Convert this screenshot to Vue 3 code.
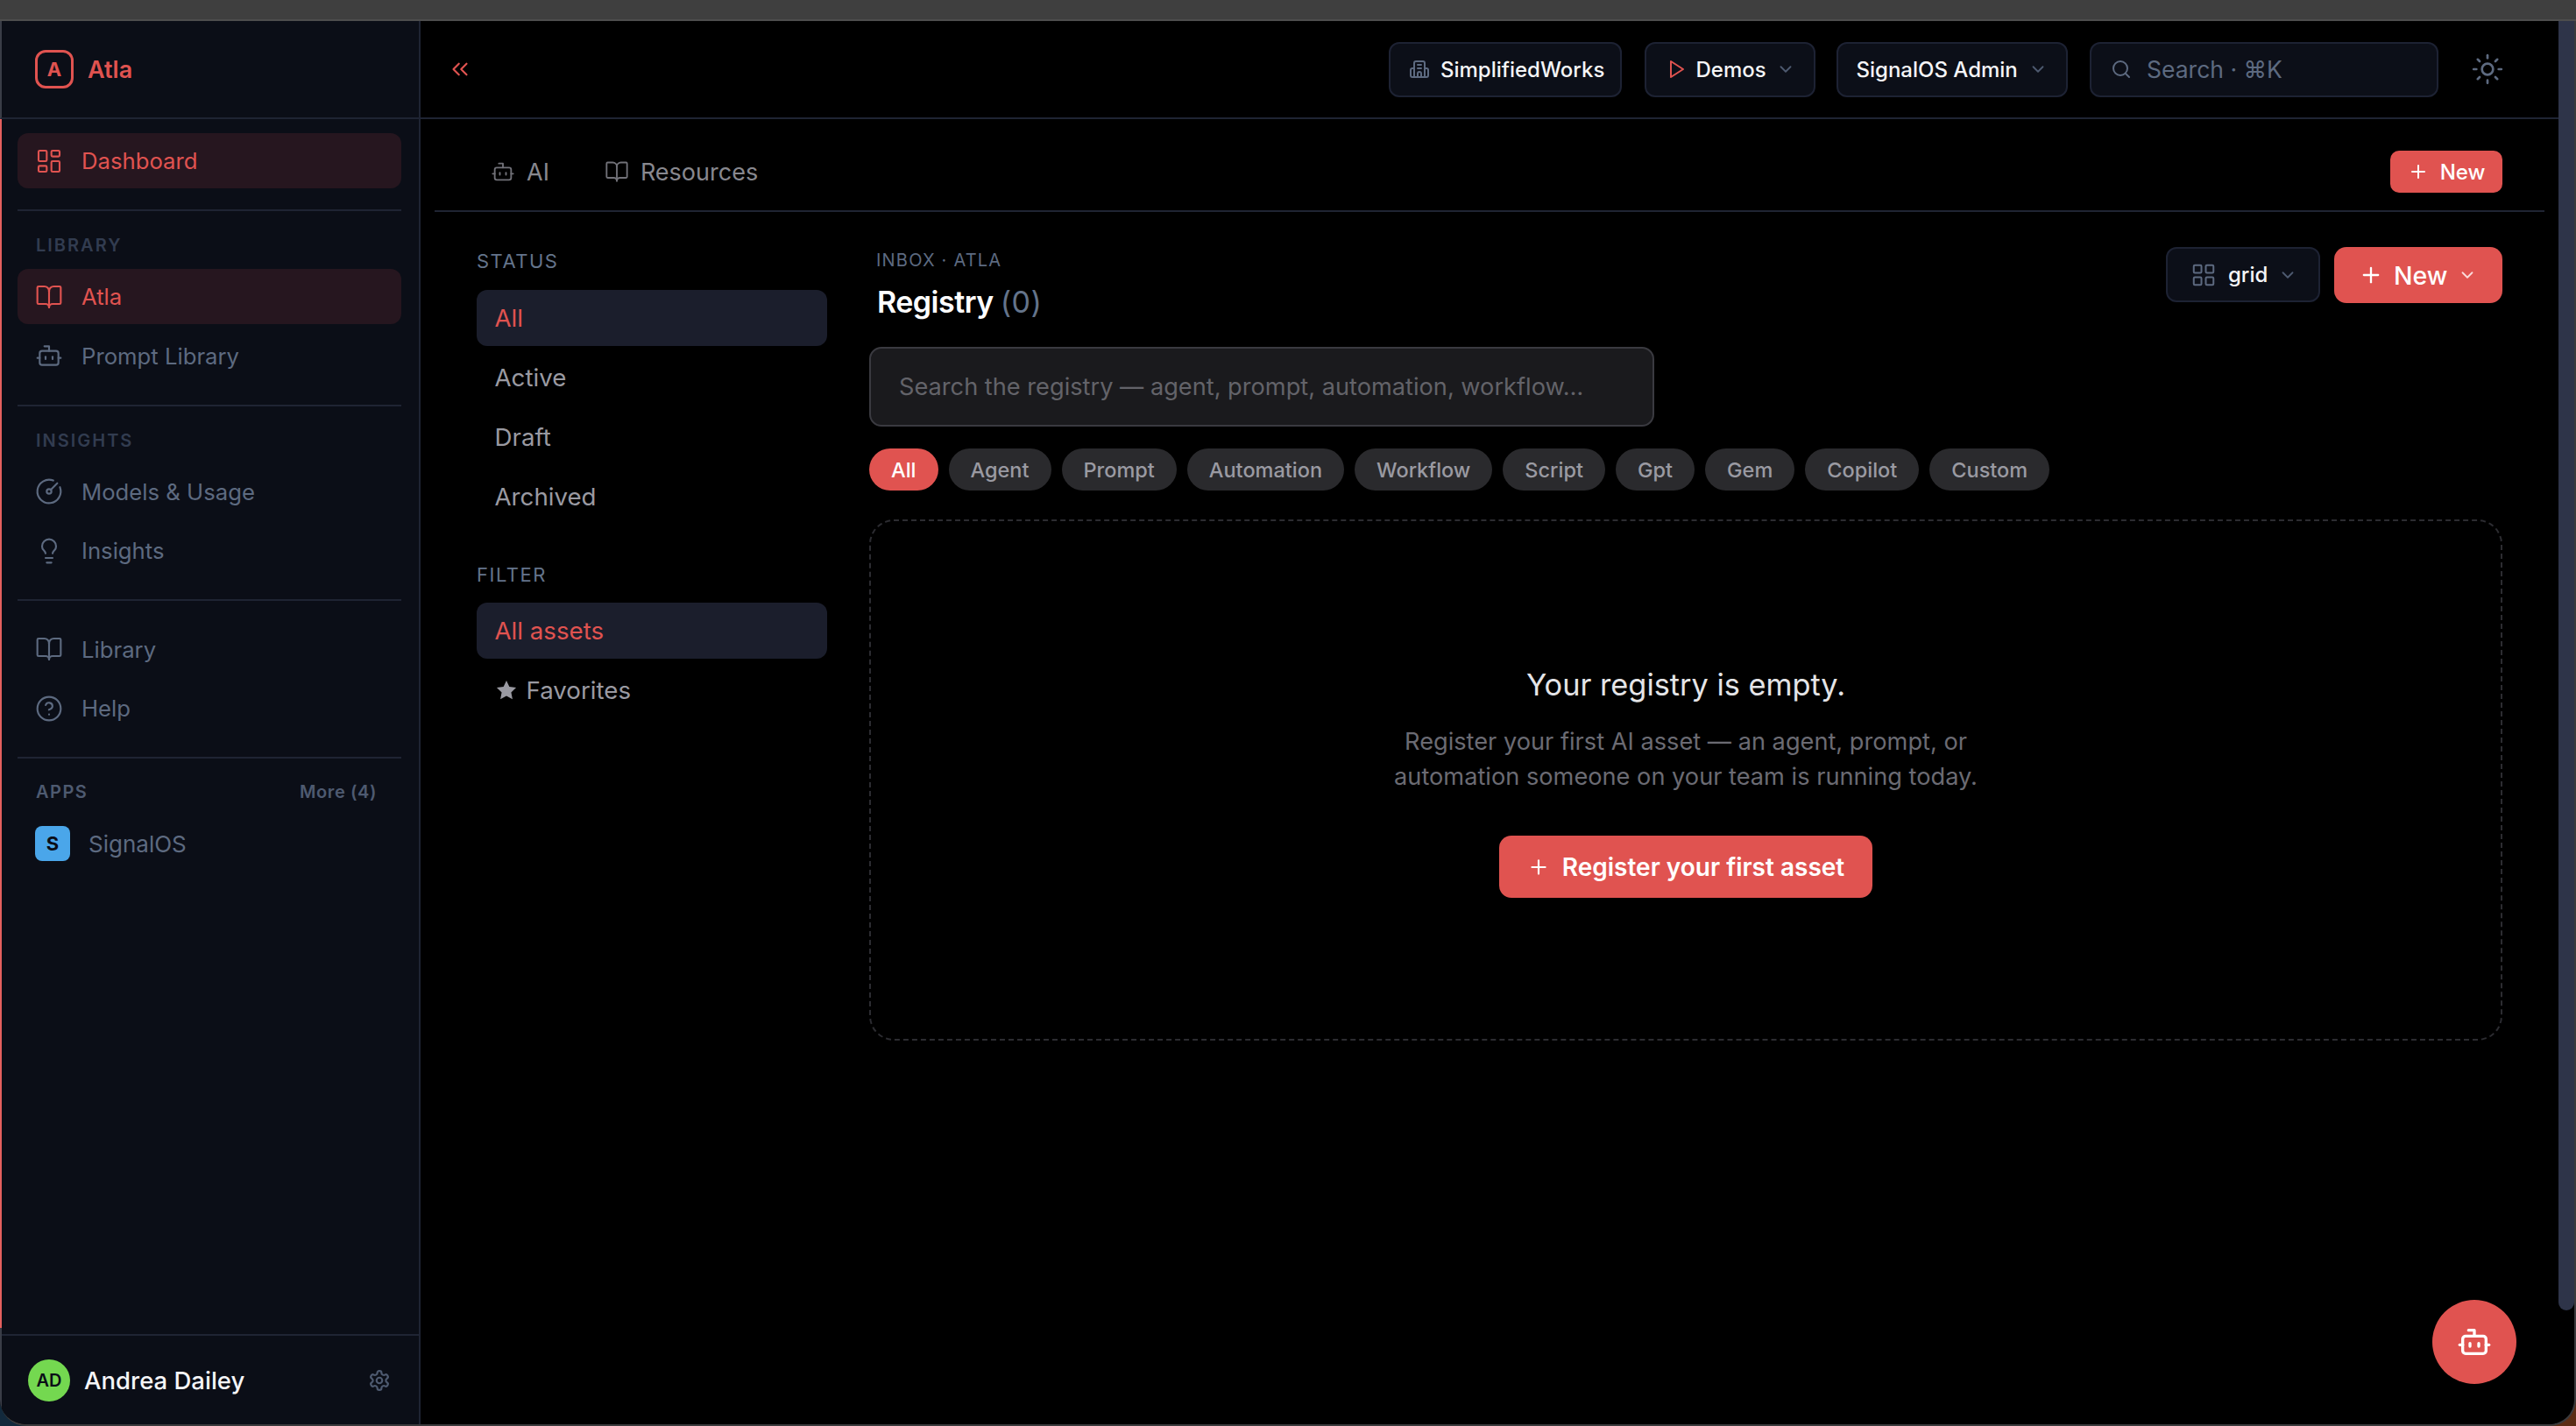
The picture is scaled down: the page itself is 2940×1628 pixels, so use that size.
<script setup>
// lucide style icon bodies, all on a 24 box
const icons = {
  dashboard: '<rect width="7" height="9" x="3" y="3" rx="1"/><rect width="7" height="5" x="14" y="3" rx="1"/><rect width="7" height="9" x="14" y="12" rx="1"/><rect width="7" height="5" x="3" y="16" rx="1"/>',
  book: '<path d="M12 7v14"/><path d="M3 18a1 1 0 0 1-1-1V4a1 1 0 0 1 1-1h5a4 4 0 0 1 4 4 4 4 0 0 1 4-4h5a1 1 0 0 1 1 1v13a1 1 0 0 1-1 1h-6a3 3 0 0 0-3 3 3 3 0 0 0-3-3z"/>',
  bot: '<path d="M12 8V4H8"/><rect width="16" height="12" x="4" y="8" rx="2"/><path d="M2 14h2"/><path d="M20 14h2"/><path d="M15 13v2"/><path d="M9 13v2"/>',
  gauge: '<path d="M15.6 2.7a10 10 0 1 0 5.7 5.7"/><circle cx="12" cy="12" r="2"/><path d="M13.4 10.6 19 5"/>',
  bulb: '<path d="M15 14c.2-1 .7-1.7 1.5-2.5 1-.9 1.5-2.2 1.5-3.5A6 6 0 0 0 6 8c0 1 .2 2.2 1.5 3.5.7.7 1.3 1.5 1.5 2.5"/><path d="M9 18h6"/><path d="M10 22h4"/>',
  help: '<circle cx="12" cy="12" r="10"/><path d="M9.09 9a3 3 0 0 1 5.83 1c0 2-3 3-3 3"/><path d="M12 17h.01"/>',
  gear: '<path d="M12.22 2h-.44a2 2 0 0 0-2 2v.18a2 2 0 0 1-1 1.73l-.43.25a2 2 0 0 1-2 0l-.15-.08a2 2 0 0 0-2.73.73l-.22.38a2 2 0 0 0 .73 2.73l.15.1a2 2 0 0 1 1 1.72v.51a2 2 0 0 1-1 1.74l-.15.09a2 2 0 0 0-.73 2.73l.22.38a2 2 0 0 0 2.73.73l.15-.08a2 2 0 0 1 2 0l.43.25a2 2 0 0 1 1 1.73V20a2 2 0 0 0 2 2h.44a2 2 0 0 0 2-2v-.18a2 2 0 0 1 1-1.73l.43-.25a2 2 0 0 1 2 0l.15.08a2 2 0 0 0 2.73-.73l.22-.39a2 2 0 0 0-.73-2.73l-.15-.08a2 2 0 0 1-1-1.74v-.5a2 2 0 0 1 1-1.74l.15-.09a2 2 0 0 0 .73-2.73l-.22-.38a2 2 0 0 0-2.73-.73l-.15.08a2 2 0 0 1-2 0l-.43-.25a2 2 0 0 1-1-1.73V4a2 2 0 0 0-2-2z"/><circle cx="12" cy="12" r="3"/>',
  // tower with two side wings, door at the foot
  building: '<path d="M6 21V5a2 2 0 0 1 2-2h8a2 2 0 0 1 2 2v16Z"/><path d="M6 11H4a2 2 0 0 0-2 2v6a2 2 0 0 0 2 2h2"/><path d="M18 11h2a2 2 0 0 1 2 2v6a2 2 0 0 1-2 2h-2"/><path d="M10 7h4"/><path d="M10 11h4"/><path d="M10 21v-4a2 2 0 0 1 4 0v4"/>',
  play: '<polygon points="6 3 20 12 6 21 6 3"/>',
  chevron: '<path d="m6 9 6 6 6-6"/>',
  collapse: '<path d="m11 17-5-5 5-5"/><path d="m18 17-5-5 5-5"/>',
  search: '<circle cx="11" cy="11" r="8"/><path d="m21 21-4.3-4.3"/>',
  sun: '<circle cx="12" cy="12" r="4"/><path d="M12 2v2"/><path d="M12 20v2"/><path d="m4.93 4.93 1.41 1.41"/><path d="m17.66 17.66 1.41 1.41"/><path d="M2 12h2"/><path d="M20 12h2"/><path d="m6.34 17.66-1.41 1.41"/><path d="m19.07 4.93-1.41 1.41"/>',
  plus: '<path d="M5 12h14"/><path d="M12 5v14"/>',
  grid: '<rect width="7" height="7" x="3" y="3" rx="1"/><rect width="7" height="7" x="14" y="3" rx="1"/><rect width="7" height="7" x="14" y="14" rx="1"/><rect width="7" height="7" x="3" y="14" rx="1"/>',
};

const statuses = ['All', 'Active', 'Draft', 'Archived'];
const chips = ['All', 'Agent', 'Prompt', 'Automation', 'Workflow', 'Script', 'Gpt', 'Gem', 'Copilot', 'Custom'];
</script>

<template>
  <div class="screen">
    <div class="strip"></div>
    <div class="window">
      <aside class="sidebar">
        <div class="brand">
          <span class="brand-mark">A</span>
          <span class="brand-name">Atla</span>
        </div>

        <nav class="nav">
          <div class="nav-group first">
            <a class="nav-item active"><svg class="nav-icon" viewBox="0 0 24 24" v-html="icons.dashboard"></svg>Dashboard</a>
          </div>
          <div class="nav-group">
            <div class="nav-label">LIBRARY</div>
            <a class="nav-item active"><svg class="nav-icon" viewBox="0 0 24 24" v-html="icons.book"></svg>Atla</a>
            <a class="nav-item"><svg class="nav-icon" viewBox="0 0 24 24" v-html="icons.bot"></svg>Prompt Library</a>
          </div>
          <div class="nav-group">
            <div class="nav-label">INSIGHTS</div>
            <a class="nav-item"><svg class="nav-icon" viewBox="0 0 24 24" v-html="icons.gauge"></svg>Models &amp; Usage</a>
            <a class="nav-item"><svg class="nav-icon" viewBox="0 0 24 24" v-html="icons.bulb"></svg>Insights</a>
          </div>
          <div class="nav-group plain">
            <a class="nav-item"><svg class="nav-icon" viewBox="0 0 24 24" v-html="icons.book"></svg>Library</a>
            <a class="nav-item"><svg class="nav-icon" viewBox="0 0 24 24" v-html="icons.help"></svg>Help</a>
          </div>
          <div class="nav-group last">
            <div class="apps-head"><span>APPS</span><span class="more">More (4)</span></div>
            <div class="app-row"><span class="app-badge">S</span>SignalOS</div>
          </div>
        </nav>

        <div class="side-foot">
          <div class="user">
            <span class="avatar">AD</span>
            <span class="user-name">Andrea Dailey</span>
            <svg class="gear" viewBox="0 0 24 24" v-html="icons.gear"></svg>
          </div>
        </div>
      </aside>

      <main class="main">
        <header class="topbar">
          <svg class="collapse" viewBox="0 0 24 24" v-html="icons.collapse"></svg>
          <div class="top-actions">
            <button class="top-btn org"><svg class="top-icon muted" viewBox="0 0 24 24" v-html="icons.building"></svg>SimplifiedWorks</button>
            <button class="top-btn demos"><svg class="top-icon red" viewBox="0 0 24 24" v-html="icons.play"></svg>Demos<svg class="caret" viewBox="0 0 24 24" v-html="icons.chevron"></svg></button>
            <button class="top-btn admin">SignalOS Admin<svg class="caret" viewBox="0 0 24 24" v-html="icons.chevron"></svg></button>
            <div class="top-search"><svg class="top-icon muted" viewBox="0 0 24 24" v-html="icons.search"></svg>Search · ⌘K</div>
            <svg class="sun" viewBox="0 0 24 24" v-html="icons.sun"></svg>
          </div>
        </header>

        <div class="body">
          <div class="tabs">
            <div class="tab"><svg class="tab-icon" viewBox="0 0 24 24" v-html="icons.bot"></svg>AI</div>
            <div class="tab"><svg class="tab-icon" viewBox="0 0 24 24" v-html="icons.book"></svg>Resources</div>
            <button class="new-small"><svg class="plus" viewBox="0 0 24 24" v-html="icons.plus"></svg>New</button>
          </div>

          <div class="columns">
            <section class="filters">
              <div class="filter-label">STATUS</div>
              <div v-for="s in statuses" :key="s" class="filter-item" :class="{ on: s === 'All' }">{{ s }}</div>
              <div class="filter-label second">FILTER</div>
              <div class="filter-item on">All assets</div>
              <div class="filter-item">
                <svg class="star" viewBox="0 0 24 24"><path d="M12 1.8l3.1 6.6 7.1.9-5.2 5 1.4 7.2L12 18l-6.4 3.5L7 14.3l-5.2-5 7.1-.9z"/></svg>
                Favorites
              </div>
            </section>

            <section class="content">
              <div class="content-head">
                <div class="titles">
                  <div class="crumb">INBOX · ATLA</div>
                  <h1 class="title">Registry <span>(0)</span></h1>
                </div>
                <div class="head-actions">
                  <button class="view-btn"><svg class="grid-icon" viewBox="0 0 24 24" v-html="icons.grid"></svg>grid<svg class="caret" viewBox="0 0 24 24" v-html="icons.chevron"></svg></button>
                  <button class="new-big"><svg class="plus-big" viewBox="0 0 24 24" v-html="icons.plus"></svg>New<svg class="caret light" viewBox="0 0 24 24" v-html="icons.chevron"></svg></button>
                </div>
              </div>

              <div class="registry-search">Search the registry — agent, prompt, automation, workflow…</div>

              <div class="chips">
                <span v-for="c in chips" :key="c" class="chip" :class="{ on: c === 'All' }">{{ c }}</span>
              </div>

              <div class="empty">
                <div class="empty-title">Your registry is empty.</div>
                <p class="empty-text">Register your first AI asset — an agent, prompt, or<br>automation someone on your team is running today.</p>
                <button class="register"><svg class="plus-reg" viewBox="0 0 24 24" v-html="icons.plus"></svg>Register your first asset</button>
              </div>
            </section>
          </div>
        </div>

        <button class="fab"><svg viewBox="0 0 24 24" v-html="icons.bot"></svg></button>
      </main>

      <div class="track"><div class="thumb"></div></div>
    </div>
  </div>
</template>

<style scoped>
.screen {
  height: 1628px;
  display: flex;
  flex-direction: column;
  overflow: hidden;
  background: linear-gradient(90deg, #12293c 0%, #12293c 50%, #5c2c14 50%, #5c2c14 100%);
  font-family: Inter, "Noto Sans", sans-serif;
}

.strip {
  height: 24px;
  flex: none;
  box-sizing: border-box;
  background: #3f3f3f;
  border-bottom: 2px solid #4d4d4d;
}

.window {
  flex: 1;
  min-height: 0;
  display: flex;
  background: #000;
  border-right: 2px solid #3a3a3c;
  border-bottom: 2px solid #3a3a3c;
  border-radius: 0 0 30px 30px;
  overflow: hidden;
}

svg {
  fill: none;
  stroke: currentColor;
  stroke-width: 2;
  stroke-linecap: round;
  stroke-linejoin: round;
  flex: none;
}

button {
  font-family: inherit;
  cursor: pointer;
}

/* sidebar */
.sidebar {
  width: 480px;
  flex: none;
  box-sizing: border-box;
  display: flex;
  flex-direction: column;
  background: #0b0e17;
  border-right: 2px solid #1f2433;
}

.brand {
  height: 112px;
  flex: none;
  box-sizing: border-box;
  display: flex;
  align-items: center;
  gap: 16px;
  padding: 0 0 0 38px;
  border-left: 2px solid #3a3d47;
  border-bottom: 2px solid #1f2433;
  color: #e05350;
}

.brand-mark {
  width: 44px;
  height: 44px;
  box-sizing: border-box;
  display: flex;
  align-items: center;
  justify-content: center;
  border: 3px solid #e05350;
  border-radius: 12px;
  font-size: 22px;
  font-weight: 700;
}

.brand-name {
  font-size: 27px;
  font-weight: 600;
}

.nav {
  flex: 1;
  min-height: 0;
  box-sizing: border-box;
  padding: 0 20px 0 18px;
  border-left: 2px solid #e4605e;
}

.nav-group {
  padding: 27px 0 19.5px;
  border-bottom: 2px solid #1f2433;
}

.nav-group.first {
  padding: 16px 0 19.5px;
}

.nav-group.plain {
  padding-top: 23.5px;
}

.nav-group.last {
  padding: 26px 0 0;
  border-bottom: none;
}

.nav-label {
  height: 24px;
  line-height: 24px;
  margin-bottom: 15px;
  padding-left: 21px;
  font-size: 20px;
  font-weight: 600;
  letter-spacing: 2px;
  color: #323c50;
}

.nav-item {
  height: 63px;
  display: flex;
  align-items: center;
  gap: 21px;
  margin-bottom: 4.5px;
  padding-left: 20px;
  border-radius: 12px;
  font-size: 25.7px;
  color: #5d6a80;
}

.nav-item.active {
  background: #26161f;
  color: #e05350;
}

.nav-icon {
  width: 32px;
  height: 32px;
  stroke-width: 1.6;
}

.apps-head {
  display: flex;
  justify-content: space-between;
  height: 24px;
  line-height: 24px;
  margin-bottom: 27px;
  padding: 0 28px 0 21px;
  font-size: 20px;
  font-weight: 600;
  letter-spacing: 1.5px;
  color: #4e5a70;
}

.more {
  letter-spacing: 0.6px;
}

.app-row {
  display: flex;
  align-items: center;
  gap: 21px;
  padding-left: 20px;
  font-size: 26px;
  color: #5d6a80;
}

.app-badge {
  width: 40px;
  height: 40px;
  display: flex;
  align-items: center;
  justify-content: center;
  border-radius: 8px;
  background: #4aa6ea;
  color: #0b0e17;
  font-size: 22px;
  font-weight: 700;
}

.side-foot {
  flex: none;
  padding-top: 7px;
  border-left: 2px solid #3a3d47;
}

.user {
  height: 103px;
  box-sizing: border-box;
  display: flex;
  align-items: center;
  padding: 0 32px 0 30px;
  border-top: 2px solid #1f2433;
}

.avatar {
  width: 48px;
  height: 48px;
  display: flex;
  align-items: center;
  justify-content: center;
  border-radius: 50%;
  background: #74d850;
  color: #0b0e17;
  font-size: 20px;
  font-weight: 600;
}

.user-name {
  flex: 1;
  margin-left: 16px;
  font-size: 27.5px;
  font-weight: 500;
  color: #f5f5f7;
}

.gear {
  width: 26px;
  height: 26px;
  color: #4e5a70;
}

/* main */
.main {
  flex: 1;
  min-width: 0;
  position: relative;
  display: flex;
  flex-direction: column;
  background: #000;
}

.topbar {
  height: 112px;
  flex: none;
  box-sizing: border-box;
  display: flex;
  align-items: center;
  justify-content: space-between;
  padding: 0 62px 0 30px;
  border-bottom: 2px solid #1f2433;
}

.collapse {
  width: 30px;
  height: 30px;
  color: #e05350;
  stroke-width: 1.7;
}

.top-actions {
  display: flex;
  align-items: center;
}

.top-btn,
.top-search {
  height: 63px;
  box-sizing: border-box;
  display: flex;
  align-items: center;
  background: #0c0f18;
  border: 2px solid #1d2233;
  border-radius: 12px;
}

.top-btn {
  margin-right: 25.5px;
  font-size: 24px;
  font-weight: 500;
  color: #f5f5f7;
}

.org {
  width: 266px;
  padding: 0 0 0 21px;
  gap: 12px;
}

.demos {
  width: 195px;
  margin-right: 24px;
  padding: 0 0 0 22px;
  gap: 11px;
}

.admin {
  width: 264px;
  padding: 0 0 0 21px;
  gap: 12px;
}

.top-icon {
  width: 24px;
  height: 24px;
}

.top-icon.muted {
  color: #5d6a80;
}

.top-icon.red {
  color: #e05350;
}

.caret {
  width: 22px;
  height: 22px;
  color: #4e5a70;
  margin-left: 0;
}

.caret.light {
  color: #fbdcdc;
}

.top-search {
  width: 398px;
  padding-left: 22px;
  gap: 17px;
  font-size: 26.5px;
  color: #5d6a80;
}

.sun {
  width: 38px;
  height: 38px;
  margin-left: 37px;
  color: #5d6a80;
  stroke-width: 1.7;
}

.body {
  flex: 1;
  min-height: 0;
  padding: 0 16px;
}

.tabs {
  height: 106px;
  box-sizing: border-box;
  display: flex;
  align-items: center;
  padding: 16px 48px 0 64px;
  border-bottom: 2px solid #1f2433;
}

.tab {
  display: flex;
  align-items: center;
  gap: 13px;
  margin-right: 63px;
  font-size: 27px;
  color: #88888f;
}

.tab-icon {
  width: 28px;
  height: 28px;
  stroke-width: 1.6;
  color: #717178;
}

.new-small {
  margin-left: auto;
  width: 128px;
  height: 48px;
  display: flex;
  align-items: center;
  justify-content: center;
  gap: 13px;
  padding: 0;
  border: none;
  border-radius: 10px;
  background: #e05350;
  color: #fff;
  font-size: 24px;
  font-weight: 500;
}

.plus {
  width: 24px;
  height: 24px;
}

.columns {
  display: flex;
  gap: 48px;
  padding: 0 48px;
}

.filters {
  width: 400px;
  flex: none;
  padding-top: 44px;
}

.filter-label {
  height: 24px;
  line-height: 24px;
  margin-bottom: 21px;
  font-size: 22px;
  letter-spacing: 1.5px;
  color: #64748b;
}

.filter-label.second {
  margin-top: 45px;
  margin-bottom: 20px;
}

.filter-item {
  height: 64px;
  display: flex;
  align-items: center;
  gap: 10px;
  margin-bottom: 4px;
  padding-left: 20.5px;
  border-radius: 12px;
  font-size: 27.7px;
  color: #9a9aa2;
}

.filter-item.on {
  background: #1b1e2c;
  color: #e05350;
}

.star {
  width: 26px;
  height: 26px;
  fill: #9a9aa2;
  stroke: none;
}

.content {
  flex: 1;
  min-width: 0;
  padding-top: 40px;
}

.content-head {
  display: flex;
  justify-content: space-between;
  align-items: flex-start;
}

.titles {
  padding: 3px 0 0 8px;
}

.crumb {
  height: 24px;
  line-height: 24px;
  font-size: 20px;
  letter-spacing: 1.2px;
  color: #5d6a80;
}

.title {
  margin: 14px 0 0 1px;
  line-height: 44px;
  font-size: 34px;
  font-weight: 600;
  letter-spacing: -0.5px;
  color: #fff;
}

.title span {
  font-weight: 400;
  letter-spacing: 0.4px;
  color: #64748b;
}

.head-actions {
  display: flex;
  gap: 16px;
}

.view-btn {
  width: 176px;
  height: 63px;
  display: flex;
  align-items: center;
  gap: 13px;
  padding: 0 0 0 26px;
  background: #0c0f18;
  border: 2px solid #1d2233;
  border-radius: 12px;
  color: #f5f5f7;
  font-size: 24px;
  font-weight: 500;
}

.view-btn .caret {
  margin-left: -1px;
}

.grid-icon {
  width: 30px;
  height: 30px;
  color: #5d6a80;
  stroke-width: 1.6;
}

.new-big {
  width: 192px;
  height: 64px;
  display: flex;
  align-items: center;
  padding: 0 0 0 28px;
  border: none;
  border-radius: 14px;
  background: #e05350;
  color: #fff;
  font-size: 28.5px;
  font-weight: 500;
  gap: 12px;
}

.plus-big {
  width: 28px;
  height: 28px;
}

.registry-search {
  width: 896px;
  height: 91px;
  box-sizing: border-box;
  display: flex;
  align-items: center;
  margin-top: 29px;
  padding-left: 32px;
  background: #1a1a1d;
  border: 2px solid #3a3a40;
  border-radius: 14px;
  font-size: 27.2px;
  color: #636369;
}

.chips {
  display: flex;
  gap: 12px;
  margin-top: 25px;
}

.chip {
  height: 48px;
  display: flex;
  align-items: center;
  padding: 0 25px;
  border-radius: 24px;
  background: #2a2a2d;
  color: #9a9aa2;
  font-size: 23.5px;
  font-weight: 500;
}

.chip.on {
  background: #e05350;
  color: #fff;
}

.empty {
  height: 595px;
  box-sizing: border-box;
  margin-top: 33px;
  padding-top: 165px;
  display: flex;
  flex-direction: column;
  align-items: center;
  border: 2px dashed #2c2c31;
  border-radius: 28px;
}

.empty-title {
  line-height: 44px;
  font-size: 34.3px;
  font-weight: 400;
  color: #e4e4e7;
}

.empty-text {
  margin: 23px 0 0;
  line-height: 40px;
  text-align: center;
  font-size: 27.2px;
  color: #6b6b73;
}

.register {
  width: 426px;
  height: 71px;
  display: flex;
  align-items: center;
  justify-content: center;
  gap: 14px;
  margin-top: 47px;
  padding: 0;
  border: none;
  border-radius: 14px;
  background: #e05350;
  color: #fff;
  font-size: 28px;
  font-weight: 600;
}

.plus-reg {
  width: 26px;
  height: 26px;
}

.fab {
  position: absolute;
  right: 48px;
  bottom: 46px;
  width: 96px;
  height: 96px;
  display: flex;
  align-items: center;
  justify-content: center;
  padding: 0;
  border: none;
  border-radius: 50%;
  background: #e05350;
  color: #fff;
}

.fab svg {
  width: 40px;
  height: 40px;
}

.track {
  width: 18px;
  flex: none;
}

.thumb {
  height: 1472px;
  background: #2e3449;
  border-radius: 0 0 9px 9px;
}
</style>

<style>
html,
body {
  margin: 0;
  background: #000;
}
</style>
